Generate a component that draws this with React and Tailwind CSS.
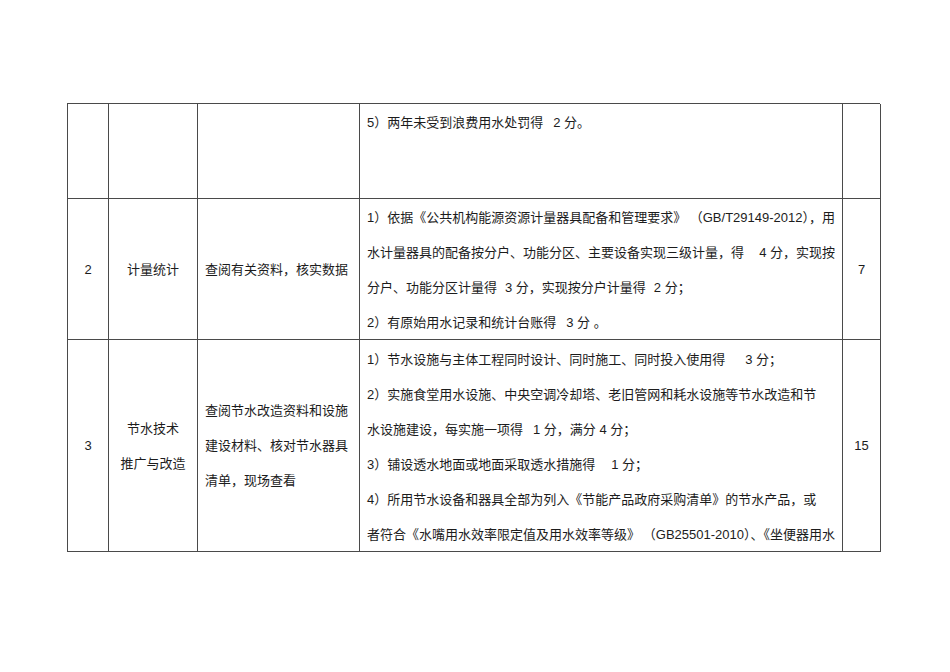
import React from 'react';

const cell = 'border-r border-b border-[#4a4a4a]';
const gap = (w) => <span style={{ display: 'inline-block', width: w }} />;

const App = () => {
  return (
    <div
      className="w-[950px] h-[672px] bg-white text-[13px] text-[#1c1c1c] leading-[35px] overflow-hidden"
      style={{ fontFamily: '"Liberation Sans", "Noto Sans CJK SC", sans-serif' }}
    >
      <div className="pt-[103px] pl-[67px]">
        <div className="grid grid-cols-[41px_89px_162px_483px_38px] grid-rows-[95px_141px_212px] w-[813px] border-l border-t border-[#4a4a4a]">
          {/* row 1: continued from previous page */}
          <div className={cell} />
          <div className={cell} />
          <div className={cell} />
          <div className={`${cell} pl-[7px] pt-[1px]`}>
            <div>
              5）两年未受到浪费用水处罚得{gap('10px')}2 分。
            </div>
          </div>
          <div className={cell} />

          {/* row 2 */}
          <div className={`${cell} flex items-center justify-center`}>2</div>
          <div className={`${cell} flex items-center justify-center`}>计量统计</div>
          <div className={`${cell} flex items-center pl-[7px]`}>查阅有关资料，核实数据</div>
          <div className={`${cell} pl-[7px] pr-[7px] pt-[1px]`}>
            <div className="flex justify-between">
              <span>1）依据《公共机构能源资源计量器具配备和管理要求》</span>
              <span>（GB/T29149-2012），用</span>
            </div>
            <div className="flex justify-between">
              <span>水计量器具的配备按分户、功能分区、主要设备实现三级计量，得</span>
              <span>4 分，实现按</span>
            </div>
            <div>
              分户、功能分区计量得{gap('8px')}3 分，实现按分户计量得{gap('8px')}2 分；
            </div>
            <div>
              2）有原始用水记录和统计台账得{gap('10px')}3 分 。
            </div>
          </div>
          <div className={`${cell} flex items-center justify-center`}>7</div>

          {/* row 3 */}
          <div className={`${cell} flex items-center justify-center`}>3</div>
          <div className={`${cell} flex flex-col items-center justify-center`}>
            <div>节水技术</div>
            <div>推广与改造</div>
          </div>
          <div className={`${cell} flex flex-col justify-center pl-[7px]`}>
            <div>查阅节水改造资料和设施</div>
            <div>建设材料、核对节水器具</div>
            <div>清单，现场查看</div>
          </div>
          <div className={`${cell} pl-[7px] pr-[7px] pt-[2px]`}>
            <div>
              1）节水设施与主体工程同时设计、同时施工、同时投入使用得{gap('20px')}3 分；
            </div>
            <div>2）实施食堂用水设施、中央空调冷却塔、老旧管网和耗水设施等节水改造和节</div>
            <div>
              水设施建设，每实施一项得{gap('10px')}1 分，满分 4 分；
            </div>
            <div>
              3）铺设透水地面或地面采取透水措施得{gap('16px')}1 分；
            </div>
            <div>4）所用节水设备和器具全部为列入《节能产品政府采购清单》的节水产品，或</div>
            <div className="flex justify-between">
              <span>者符合《水嘴用水效率限定值及用水效率等级》</span>
              <span>（GB25501-2010）、《坐便器用水</span>
            </div>
          </div>
          <div className={`${cell} flex items-center justify-center`}>15</div>
        </div>
      </div>
    </div>
  );
};

export default App;
